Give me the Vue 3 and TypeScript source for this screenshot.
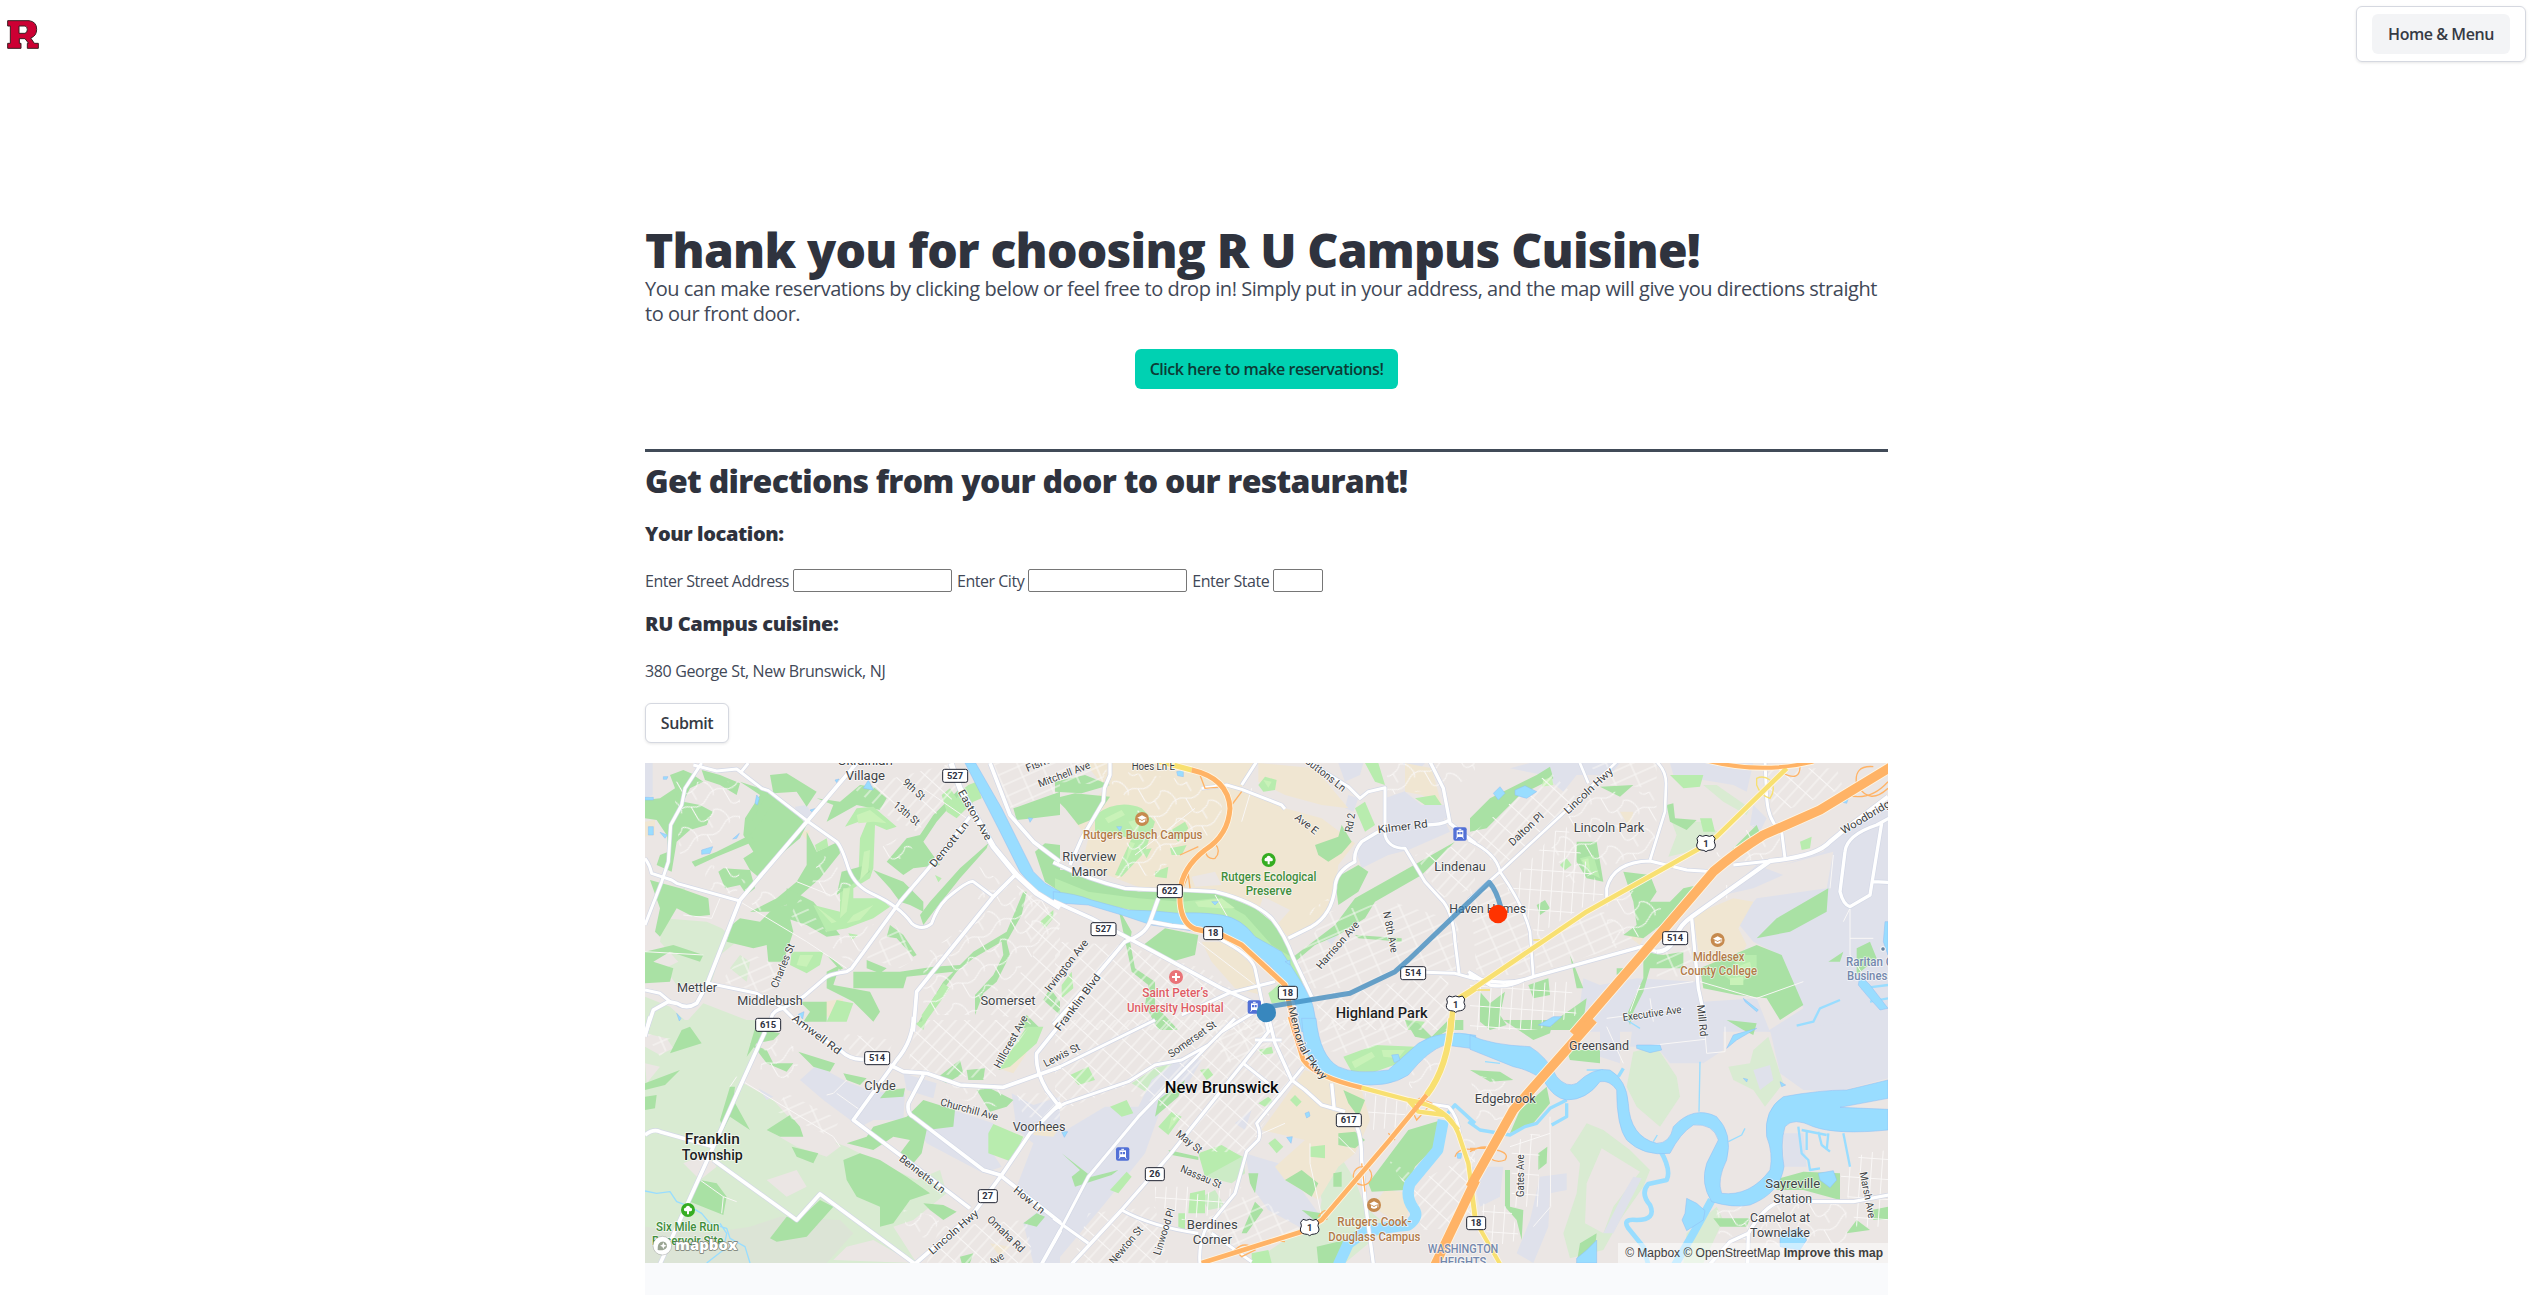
<script setup lang="ts">
import { ref } from 'vue'

type Sheet = 'A' | 'B' | 'C' | 'D' | 'E' | 'F'
type Shape = [Sheet, string, string]
type Place = [Sheet, string, number, number, number, string]
type Street = [Sheet, string, number, number, number, number]
type Shield = [Sheet, string, number, number]

// The map is drawn in six sheets of one common coordinate space.
const origin: Record<Sheet, [number, number]> = {
  A: [0, 0], B: [1245, 0], C: [2490, 0], D: [0, 795], E: [1245, 795], F: [2490, 795],
}
const at = (s: Sheet, x = 0, y = 0) => `translate(${origin[s][0] + x} ${origin[s][1] + y})`

const areas: Shape[] = [
  // open land
  ['A', 'field', 'M70 490L200 500 245 520 290 560 240 600 215 680 110 690 75 640 115 620 60 560Z'],
  ['A', 'field', 'M15 725L90 755 140 800 190 745 410 830 15 830Z'],
  ['A', 'field', 'M120 160L180 170 165 198 130 185ZM105 400L135 400 130 450 100 450ZM300 600L330 620 320 680 270 640Z'],
  ['D', 'field', 'M15 0L370 0 310 190 400 240 480 330 620 380 700 420 830 480 900 450 920 520 820 600 760 620 830 729 15 729Z'],
  ['D', 'moss', 'M15 620L200 640 330 620 420 590 600 600 640 640 560 729 15 729Z'],
  ['D', 'land', 'M15 40L80 55 100 85 60 105 15 80ZM15 130L60 140 20 190ZM400 340L470 310 560 345 600 380 560 410 470 380ZM580 720L620 680 700 660 820 729Z'],
  ['D', 'land', 'M130 430L200 400 230 440 180 480ZM380 480L470 450 500 500 440 530Z'],
  ['E', 'field', 'M760 370L850 400 900 480 930 560 1000 620 870 729 590 729 690 660 790 600 800 540Z'],
  ['E', 'field2', 'M230 190L300 145 350 130 345 190 280 220ZM440 400L500 380 565 410 570 460 530 490 450 470ZM440 530L480 510 510 560 460 570Z'],
  ['F', 'field', 'M350 310L400 330 480 390 540 450 520 500 450 600 400 690 300 715 280 640 320 520 330 430 300 390Z'],
  ['F', 'land', 'M395 385L510 455 430 560 400 640 345 610 350 490Z'],
  ['F', 'field', 'M490 95L560 80 620 170 630 230 570 320 500 260 470 200Z'],
  ['F', 'field', 'M775 140L840 130 850 90 895 50 940 190 885 260 850 210 790 180Z'],
  ['F', 'field', 'M650 640L740 560 760 600 700 729 640 729Z'],
  ['C', 'field', 'M605 200L690 200 760 240 680 285 595 305 620 240ZM700 90L740 90 840 160 830 180 760 140Z'],
  // built-up and industrial
  ['A', 'works', 'M15 24L38 24 38 120 15 130ZM465 155L500 150 515 175 495 195 470 180Z'],
  ['B', 'works', 'M900 280L1000 215 990 130 1060 105 1060 30 1050 130 1160 180 1185 230 1060 285 1000 300 920 340ZM690 55L715 70 700 90ZM800 100L835 115 800 135ZM850 24L925 24 915 60 870 80ZM880 120L910 130 895 170 870 160ZM1040 24L1110 24 1080 60ZM810 550L860 520 830 570Z'],
  ['B', 'works', 'M560 360L600 310 620 320 570 440 540 430ZM990 140L1050 110 1100 150 1180 150 1180 190 1000 210Z'],
  ['C', 'works', 'M120 40L180 24 310 24 450 24 420 60 320 60 280 110 220 60ZM600 24L850 24 830 110 790 90 610 60ZM850 150L890 190 870 230 840 210Z'],
  ['C', 'works', 'M940 330L1060 290 1120 210 1254 160 1254 830 890 830 1000 760 930 600 850 560 800 500 860 430 1070 400 1090 290Z'],
  ['C', 'works', 'M340 670L390 690 500 670 680 680 700 740 860 730 900 830 320 830ZM760 420L860 330 940 360 850 400Z'],
  ['D', 'works', 'M480 180L530 135 620 185 700 215 795 220 790 300 700 300 660 322 550 240ZM790 160L890 190 880 235 800 210ZM835 330L870 305 940 270 1060 310 1045 380 1085 440 1030 460 860 370ZM355 205L400 230 380 240Z'],
  ['D', 'works', 'M1115 220L1180 255 1260 230 1260 729 1180 729 1150 610 1210 560 1130 500 1180 370 1130 330Z'],
  ['E', 'works', 'M0 350L150 260 250 260 290 180 380 110 440 120 400 190 320 260 270 400 150 550 0 729ZM570 400L670 430 740 510 790 580 740 625 640 570 590 500ZM540 310L590 270 570 330Z'],
  ['F', 'works', 'M900 30L1254 0 1254 175 1100 215 1000 210 930 160ZM490 0L760 0 760 90 700 130 600 130 560 80 480 80ZM390 0L450 20 450 130 390 110ZM210 470L290 460 290 510 240 520 235 620 190 729 140 700 180 600ZM940 340L1000 340 1010 440 940 440ZM0 440L100 440 90 530 30 560Z'],
  ['F', 'works', 'M455 530L490 470 515 475 430 640 400 640ZM850 150L900 135 910 180 870 210Z'],
  // campuses
  ['B', 'campus', 'M90 24L600 24 560 95 690 160 800 190 900 265 850 330 835 440 790 500 700 545 600 460 480 405 260 400 80 330 100 250 60 200 150 100Z'],
  ['B', 'campus', 'M610 24L780 40 880 160 800 150 690 120 610 80ZM1050 24L1130 40 1160 150 1100 120 1050 110ZM440 560L520 560 600 640 620 720 540 700 470 620Z'],
  ['B', 'land', 'M625 425L705 465 670 505 605 480ZM410 365L480 350 500 390 420 395Z'],
  ['C', 'campus', 'M670 480L790 430 850 440 805 520 830 570 790 640 690 620ZM450 170L490 170 480 220ZM470 540L520 550 510 570Z'],
  ['E', 'campus', 'M750 150L920 210 945 300 900 400 850 440 790 540 690 480 660 440 750 360 620 330ZM990 510L1070 520 1050 620 950 560Z'],
  ['A', 'campus', 'M15 200L45 195 45 240 15 245ZM480 230L510 225 500 255ZM555 740L610 730 600 790 560 785ZM980 85L1010 90 1000 120Z'],
  ['D', 'campus', 'M1090 150L1110 90 1160 100 1120 160ZM1180 310L1260 320 1240 350 1180 345ZM1050 670L1110 680 1080 710Z'],
  // woods
  ['A', 'wood', 'M15 135L60 130 105 100 90 60 130 45 165 60 130 120 110 200 80 240 50 195 15 190Z'],
  ['A', 'wood', 'M125 70L160 60 190 80 150 100 130 140 180 150 218 170 200 210 150 225 110 260 95 350 50 330 60 300 85 290 80 230Z'],
  ['A', 'wood', 'M185 45L240 60 300 85 290 120 240 90 195 75ZM300 80L390 110 460 165 500 210 480 250 420 300 360 370 330 345 310 310 340 290 310 240 315 190 360 120 330 100Z'],
  ['A', 'wood', 'M155 320L230 290 330 240 345 258 230 305 165 335ZM390 60L440 55 530 110 500 155 470 110 400 115ZM530 130L600 140 660 90 700 95 740 130 720 165 650 150 560 200 580 150Z'],
  ['A', 'wood', 'M500 230L530 290 595 260 600 295 540 370 460 440 390 470 330 470 410 430 470 380 500 330ZM30 375L120 400 205 430 210 480 160 485 110 460 60 545 45 530 60 460Z'],
  ['A', 'wood', 'M275 510L300 490 360 500 400 460 440 450 460 530 430 620 385 620 380 570 340 580 260 560ZM440 400L520 440 570 500 600 540 560 545 500 510 440 490Z'],
  ['A', 'wood', 'M700 345L790 380 850 440 850 470 810 450 780 440 750 400ZM740 320L800 250 840 240 880 180 960 100 960 120 890 200 850 260 900 330 820 340 790 360Z'],
  ['A', 'wood', 'M840 480L870 440 960 340 1045 265 1040 280 960 370 880 470 850 510ZM750 510L790 540 830 600 820 605 770 550 740 545ZM560 650L600 630 580 690 690 710 720 770 700 800 640 740 560 700Z'],
  ['A', 'wood', 'M640 650L780 650 880 635 960 630 1000 590 1100 530 1150 410 1160 410 1145 480 1100 560 1110 600 1070 680 1030 715 1005 780 1005 720 1060 660 1090 600 1085 560 1000 610 950 650 890 730 840 810 830 810 910 680 940 650 800 665 790 700 640 700Z'],
  ['A', 'wood', 'M15 590L100 570 190 600 180 620 90 590 40 620 100 640 90 680 15 685ZM480 740L560 740 560 800 490 800 510 770ZM1130 820L1160 780 1200 820ZM680 615L740 640 720 655 680 640Z'],
  ['A', 'wood', 'M1120 160L1260 110 1260 180 1180 190 1130 195ZM1185 290L1215 265 1260 270 1260 410 1215 380ZM1210 735L1230 700 1260 740 1260 780Z'],
  ['A', 'park', 'M905 120L930 100 950 130 960 110 985 90 1010 80 1025 130 1000 140 950 190 920 170ZM525 270L560 250 565 275 530 290Z'],
  ['A', 'park', 'M615 215L650 160 700 155 770 215 740 225 705 210 700 340 690 370 640 400 640 430 720 430 750 455 700 490 620 520 560 530 520 450 600 470 600 390 655 370 660 250 685 190Z'],
  ['A', 'park', 'M455 590L550 590 540 630 500 655 450 630ZM625 535L655 540 635 555ZM590 735L640 745 620 800 560 800ZM845 780L910 685 930 700 850 810ZM1200 500L1240 465 1240 490 1215 520ZM885 360L905 370 895 382Z'],
  ['B', 'wood', 'M0 130L60 115 165 125 120 190 70 210 30 160ZM0 80L90 60 165 90 80 115 0 110Z'],
  ['B', 'park', 'M120 180Q190 130 260 160L300 200 270 290 200 365 180 360 230 250 120 230ZM340 230L390 200 400 220 370 260ZM345 280L395 270 380 300 350 300Z'],
  ['B', 'park', 'M610 90L630 65 665 75 660 105 625 110ZM930 24L970 24 990 90 960 80ZM300 350L340 335 335 370 300 365ZM260 285L290 280 275 310Z'],
  ['B', 'park', 'M0 345L60 345 100 370 250 410 380 410 500 415 600 460 680 525 710 600 745 690 720 655 600 545 500 480 370 475 240 468 100 437 0 415Z'],
  ['B', 'wood', 'M0 345L60 345 100 370 250 410 480 412 600 460 680 525 715 610 650 570 570 480 480 430 380 440 250 430 100 410 0 370Z'],
  ['B', 'wood', 'M780 270L850 245 860 210 890 260 860 295 820 320 790 300ZM840 370L910 330 940 350 910 410 850 450ZM715 605L840 510 900 430 1060 340 1200 260 1100 360 960 440 930 490 850 540 780 570 720 620Z'],
  ['B', 'wood', 'M265 570L330 520 430 540 420 600 350 620ZM190 460L230 530 225 560 240 640 300 680 300 750 370 825 310 825 270 750 280 690 230 650ZM900 540L1040 550 1040 560 910 550Z'],
  ['B', 'park', 'M900 160L930 140 960 210 930 230ZM1080 130L1140 120 1160 150 1110 150ZM640 715L680 680 700 690 690 740 650 745ZM20 690L50 650 55 700 20 730ZM1050 795L1110 800 1090 825 1060 825Z'],
  ['C', 'wood', 'M60 130L200 60 240 35 250 70 150 120 50 220 0 230 0 190ZM390 95L490 90 450 125ZM590 150L610 145 615 190 680 195 650 225 600 200ZM320 260L380 260 400 380 350 370 320 320Z'],
  ['C', 'wood', 'M460 350L540 360 560 410 540 440 600 440 640 400 685 390 600 490 520 550 460 540 500 510 490 440ZM760 310L860 210 870 235 790 290ZM860 550L920 490 1075 400 1070 470 960 530Z'],
  ['C', 'wood', 'M690 640L860 570 935 600 1000 750 930 795 890 730 800 720 700 700ZM520 590L580 600 640 590 640 640 540 640 520 710 490 770 480 810 470 780 520 670Z'],
  ['C', 'wood', 'M200 450L225 435 240 460 210 480ZM30 710L60 745 105 710 90 780 110 810 60 825 30 800ZM175 690L235 670 240 720 190 730ZM300 600L340 700 320 700ZM250 800L350 730 340 800 300 825 240 825ZM1160 580L1200 560 1220 610 1160 660ZM440 640L470 640 440 660ZM1075 620L1120 590 1110 620Z'],
  ['C', 'park', 'M600 60L700 60 690 95 640 100ZM690 190L725 190 735 230 700 230ZM270 330L290 310 305 330 285 345ZM330 310L370 300 390 370 350 350ZM760 660L820 600 860 600 860 650 800 690ZM990 260L1025 245 1020 280 995 285Z'],
  ['D', 'wood', 'M390 655L440 590 475 600 540 540 580 560 500 650 410 665ZM610 420L660 400 720 420 800 470 870 520 810 540 760 610 720 620 720 560 650 530 620 480Z'],
  ['D', 'wood', 'M620 370L680 350 700 320 800 290 850 240 945 270 940 320 860 330 845 400 820 430 780 400 810 360 760 350 700 390ZM455 380L535 400 520 430 470 410ZM475 95L585 130 570 155 520 140Z'],
  ['D', 'wood', 'M890 175L960 120 970 160 920 190ZM980 150L1035 145 1030 180 985 180ZM1010 210L1050 205 1120 240 1100 260 1050 275ZM740 210L795 205 790 230 720 235ZM610 160L680 175 660 195 620 180ZM380 330L450 285 480 320 490 350 420 350Z'],
  ['D', 'wood', 'M15 190L120 150 75 195 15 210ZM15 230L50 225 45 265 15 270ZM125 30L150 20 185 70 90 100ZM270 200L285 200 280 240 330 330 270 290 250 330 240 300ZM330 70L380 90 400 130 460 130 440 155 380 130 350 90ZM180 480L230 490 260 530 250 585 150 545Z'],
  ['D', 'wood', 'M850 550L910 555 950 575 910 600 870 570ZM1150 610L1190 580 1215 590 1190 620ZM960 710L1000 700 990 729 965 729ZM345 25L420 40 400 60 350 70 320 110Z'],
  ['D', 'park', 'M1045 340L1060 312 1150 350 1115 425 1045 400ZM1075 150L1160 20 1210 20 1190 70 1110 140ZM825 10L860 0 850 30Z'],
  ['E', 'wood', 'M940 490L1060 330 1160 300 1150 370 1080 440 1050 510 950 515ZM690 480L740 450 790 490 770 530 740 510ZM835 460L860 455 860 500 835 500ZM580 460L610 460 600 520 585 490ZM600 545L625 570 575 640 560 640Z'],
  ['E', 'wood', 'M20 400L110 470 190 450 170 465 60 500 50 470 75 450ZM310 240L390 180 370 230 300 290ZM340 390L430 410 430 420 350 405ZM850 340L900 335 930 360 900 385 850 375ZM865 210L930 240 910 290 880 250ZM785 680L870 660 840 729 790 729ZM740 570L800 580 790 610Z'],
  ['E', 'park', 'M865 110L960 75 1080 80 1060 120 960 155 890 155ZM45 165L100 140 120 180 70 195ZM165 260L215 240 235 280 200 290ZM310 320L350 275 380 290 340 345ZM165 510L215 455 230 470 190 520ZM405 520L450 510 450 580 400 580Z'],
  ['E', 'park', 'M435 150L460 145 475 165 455 180ZM610 90L650 80 655 100 620 105ZM430 400L500 375 560 410 450 470ZM765 380L810 375 810 415 765 410ZM640 370L660 355 685 380 665 400ZM610 250L640 230 655 245 630 260ZM705 240L720 225 740 245 725 260ZM590 700L640 690 650 729 590 729ZM370 580L390 580 390 630 370 620Z'],
  ['F', 'wood', 'M100 0L250 0 240 40 190 60ZM290 90L390 90 390 130 300 120ZM120 340L150 270 230 200 240 250 190 310ZM0 150L90 155 130 180 60 185ZM910 480L1000 455 1110 460 1110 540 1000 510 920 510Z'],
  ['F', 'wood', 'M105 450L120 450 120 560 160 570 155 660 140 600 105 560ZM205 400L232 380 230 430 205 450ZM730 595L840 595 830 620 750 620ZM1205 570L1254 560 1254 600 1210 600ZM1160 600L1200 630 1130 640ZM770 0L860 10 850 45 820 30ZM330 670L380 640 370 729 320 729Z'],
  ['E', 'wood', 'M1050 0L1080 50 1130 60 1180 30 1225 30 1225 0 1180 0 1130 50 1090 10Z'],
  // creek-side strips and golf fairways
  ['A', 'wood', 'M250 340L330 345 345 400 320 420 300 390 255 400 235 350ZM385 110L410 125 370 190 330 240 325 215ZM560 600L575 610 610 640 600 645ZM590 420L605 350 680 330 690 350 620 400Z'],
  ['A', 'fair', 'M650 180L690 165 740 205 700 200 655 205ZM672 290L690 285 685 350 660 375ZM610 400L630 400 620 470 600 490ZM640 480L700 450 660 495 620 505ZM530 455L590 500 575 505ZM480 600L520 600 500 635 470 630Z'],
  ['B', 'fair', 'M150 190L200 165 210 180 160 205ZM220 200L260 190 245 240ZM225 260L240 265 210 330ZM625 75L650 80 640 98ZM420 440L500 430 540 460 500 460 430 455Z'],
  ['E', 'fair', 'M890 125L950 95 960 110 900 145ZM980 90L1050 90 1030 115 985 110ZM350 290L370 295 340 330Z'],
  ['C', 'fair', 'M335 315L355 310 360 345ZM790 640L840 620 845 640 800 665ZM220 75L245 65 250 90 215 95ZM780 670L820 665 820 690 780 690Z'],
]

const water: Shape[] = [
  ['A', '', 'M975 24L1007 24 1085 160 1180 350 1215 385 1260 410 1260 448 1190 410 1140 350 1080 230Z'],
  ['B', '', 'M-5 410Q60 415 110 435L220 465 300 468 370 475Q430 470 500 480 560 490 600 545L680 590Q720 650 750 700 780 740 785 830L740 830 720 740Q690 660 600 595L490 535 430 530 290 510 200 480 100 450 -5 443Z'],
  ['E', '', 'M740 -5L783 -5Q795 110 850 140 900 165 1000 150L1090 70Q1160 25 1262 46L1262 87 1170 75Q1120 90 1060 165 1000 205 900 192 800 180 770 130 745 80 740 -5Z'],
  ['F', '', 'M0 45Q60 75 180 80 230 110 260 170 290 205 320 190 370 140 420 150 470 180 475 250 480 350 560 370 600 370 610 320 670 255 740 290 790 340 770 420 740 480 755 520 840 530 900 450 910 400 890 350 880 270 940 230 1050 210 1130 210L1254 180 1254 235 1110 262 1254 268 1254 330Q1100 345 1030 320 970 290 945 320 930 370 942 440 930 520 840 555 790 565 725 545 690 490 710 430L745 360Q730 310 670 315 630 340 600 400 520 410 470 360 440 320 440 210 420 180 390 185 350 240 290 240 250 235 220 180 180 150 130 140L0 88Z'],
  ['F', '', 'M650 535L680 550 705 572 700 600 650 632 636 600 645 580ZM320 715L350 690 380 660 380 729 320 729ZM930 640L990 625 1010 660 990 690 930 680ZM1045 460L1090 452 1100 480 1080 503 1050 480ZM500 75L570 75 575 90 540 98 500 85ZM770 85L790 45 860 25 800 60ZM820 175L833 178 830 186ZM930 185L947 195 935 200Z'],
  ['A', '', 'M670 100L685 75 700 105ZM185 285L218 275 210 295 185 298ZM350 120L358 130 352 150 345 145ZM278 252L298 235 290 250ZM25 215L40 215 40 240 25 240ZM510 165L528 160 520 175ZM15 127L40 127 40 135 15 135ZM70 65L84 65 80 73 70 73ZM60 232L82 240 75 250ZM475 778L492 770 488 792ZM1165 188L1178 190 1170 202ZM110 775L123 790 118 798ZM585 75L597 72 590 83Z'],
  ['B', '', 'M365 50L385 45 385 65 368 62ZM470 440L490 440 480 450ZM690 620L705 615 705 630ZM185 215L200 215 195 228Z'],
  ['C', '', 'M70 115L90 95 105 115 85 135ZM135 105L165 92 200 110 170 130 135 120ZM205 810L250 785 275 785 240 815ZM1170 660L1200 690 1254 760 1230 765 1190 720 1165 690ZM1245 500L1254 500 1254 600 1240 560ZM820 730L865 765 860 770 825 740ZM1110 140L1135 130 1130 145Z'],
  ['E', '', 'M1010 105L1030 103 1035 120 1018 128ZM750 280L762 275 765 288 755 294ZM695 352L712 350 708 370ZM20 335L38 335 28 352ZM1205 400L1220 400 1218 415 1208 415Z'],
]

const streams: [Sheet, number, string][] = [
  ['E', 34, 'M1165 300L1148 390 1065 490Q1050 530 1075 565 1095 590 1060 615 1000 620 930 635L880 670 850 735'],
  ['E', 11, 'M1170 290L1200 255 1260 310'],
  ['F', 10, 'M-5 305L30 330 120 345 165 320 200 310 240 265 290 240M245 315L290 290 290 250M445 170L460 145'],
  ['F', 14, 'M570 390Q605 450 590 480L535 492Q510 520 540 555 560 600 500 600 455 595 475 625L520 680 535 735'],
  ['F', 24, 'M725 540L670 640 615 735'],
  ['F', 4, 'M690 125L687 275M775 365L815 345 825 325M550 365L562 345M45 125L90 130M350 150L400 150M510 25L470 0'],
  ['F', 7, 'M985 320L995 400 1015 420 1020 450 1050 445M995 330L1070 345M1010 335L1010 390M1045 335L1055 375 1080 395M1120 340L1140 440M1075 340L1070 390M1135 295L1170 298'],
  ['D', 4, 'M15 513L50 520 90 515 110 545 150 560 185 580 210 610 260 625 270 655 315 680 330 729M240 610L260 640 250 690 200 729'],
  ['C', 7, 'M980 812L1030 800 1050 760 1110 735M1175 700L1254 690M1200 740L1254 730'],
]

const grids: Shape[] = [
  ['A', 'g-loop', 'M100 80L300 80 300 230 120 300ZM540 290L640 380 600 440 510 410ZM700 290L790 240 830 300 740 320ZM560 560L720 500 640 640ZM1010 330L1130 410 1050 460 1000 420ZM850 600L1100 430 1200 420 1260 520 1000 780 850 780ZM300 370L420 420 350 480ZM200 330L300 340 290 420 190 400Z'],
  ['A', 'g-45', 'M640 100L940 24 960 110 830 230 740 180ZM1130 390L1260 480 1260 800 1050 780 1180 600Z'],
  ['A', 'g-20', 'M1060 24L1260 24 1260 110 1110 160ZM320 590L430 640 400 720 240 680ZM480 430L560 530 530 560 450 480ZM760 500L830 610 780 640 680 610Z'],
  ['B', 'g-20', 'M0 24L160 24 140 90 0 80ZM820 470L1010 440 1210 500 1210 650 1030 640 890 700 770 700 720 620Z'],
  ['B', 'g-45', 'M0 560L200 570 440 640 620 760 600 825 0 825ZM780 720L1180 660 1180 825 800 825ZM1080 300L1260 260 1260 400 1160 430Z'],
  ['B', 'g-loop', 'M120 40L360 70 500 110 500 220 400 270 300 360 180 370 250 160ZM990 120L1180 100 1260 60 1260 24 1000 24ZM760 470L820 430 830 480 780 510Z'],
  ['C', 'g-45', 'M0 240L240 50 320 130 90 350ZM890 40L1100 40 1120 100 910 180Z'],
  ['C', 'g-loop', 'M230 250L370 110 560 110 560 300 420 330 300 390ZM730 300L850 210 930 240 930 310 800 320ZM400 460L460 400 580 430 560 520 430 580Z'],
  ['C', 'g-20', 'M190 540L400 470 500 560 200 650ZM0 400L120 380 180 540 180 660 20 660ZM560 600L660 560 670 660 560 670ZM350 24L560 24 560 100 420 90Z'],
  ['C', 'g-0', 'M110 400L280 200 380 380 400 420 200 540ZM0 690L300 680 320 780 200 825 0 825Z'],
  ['D', 'g-45', 'M830 0L1180 0 1060 180 800 150ZM600 40L760 60 740 120 640 110ZM900 620L1160 600 1180 729 860 729ZM1130 220L1260 220 1260 300 1150 290Z'],
  ['D', 'g-loop', 'M380 40L500 100 440 180 360 150ZM790 570L900 590 880 660 800 640ZM910 180L1090 210 1070 260 920 230Z'],
  ['D', 'g-20', 'M440 220L600 300 570 350 400 270ZM15 40L110 60 60 110Z'],
  ['E', 'g-45', 'M0 0L700 0 740 130 570 400 400 390 340 270 200 200 0 280ZM100 580L300 560 340 729 50 729ZM1000 420L1100 480 1260 400 1260 620 1100 630 1080 540Z'],
  ['E', 'g-20', 'M430 0L700 0 620 90 520 130ZM790 0L1050 0 1060 60 870 100 800 90ZM470 560L600 520 740 630 560 690 450 640Z'],
  ['E', 'g-0', 'M300 500L400 500 400 580 300 560ZM380 530L560 500 500 580 380 600ZM930 220L1060 250 1040 320 950 330Z'],
  ['E', 'g-loop', 'M1080 100L1180 110 1120 220 1060 200ZM1220 330L1260 330 1260 500Z'],
  ['F', 'g-loop', 'M0 160L120 190 120 300 20 300ZM740 570L850 550 830 660 740 640ZM880 560L1130 540 1130 660 1020 700 850 729Z'],
  ['F', 'g-0', 'M125 370L210 330 205 560 125 560ZM30 550L120 560 150 660 60 680ZM1110 460L1180 400 1254 390 1254 620 1160 620Z'],
]

const minor: Shape[] = [
  ['C', '', 'M500 705L670 680M410 790L640 760M510 690L480 770M540 730L550 800M1090 300L1080 400M1120 500L1140 460M1140 550L1210 550M690 680L860 730 1000 680M770 430L770 390'],
  ['C', '', 'M1140 455L1140 600 1180 660'],
  ['F', '', 'M510 80L705 58M705 40L710 100 765 95 765 20M240 290L242 560 190 620M410 20L460 130M120 380L240 340'],
  ['D', '', 'M310 185L580 350 600 380M270 200L290 170M560 225L580 220 620 180M590 220L660 270M180 480L250 530 290 545M250 530L245 580'],
  ['E', '', 'M765 370L765 430 800 590M600 350L690 310M850 350L900 400'],
  ['A', '', 'M300 440L500 560 620 640M470 380L570 420M15 590L190 600M850 100L980 190M240 430L215 490 130 480'],
  ['B', '', 'M430 560L600 690M480 420L560 560M240 300L420 160M590 100L560 200'],
]

const roads: [Sheet, number, string][] = [
  ['A', 9, 'M185 24L135 100 125 150 92 210 85 320 65 380 15 510'],
  ['A', 9, 'M160 30L230 48 290 42 365 100 385 107 505 200 590 260Q605 275 625 340 645 395 700 418 780 455 815 505 845 530 875 505 890 460 920 430 985 375 1000 380L1060 425M325 24L300 55'],
  ['A', 11, 'M650 24L505 195 300 435 200 690 170 745Q140 765 110 745L85 740 40 765 18 830'],
  ['A', 9, 'M15 310Q30 330 35 355L95 375 110 385 300 438M15 705L60 715 90 740M205 685L350 715 430 760 490 820'],
  ['A', 10, 'M990 185L870 335 780 440 635 640 620 650Q580 655 560 665L490 725 430 760Q395 765 393 795'],
  ['A', 16, 'M933 24L960 100 1040 240 1060 275 1130 360 1190 415 1260 458'],
  ['A', 11, 'M1130 355L1060 425 830 710 820 830M1050 24L1110 180 1180 260 1260 320'],
  ['B', 10, 'M165 20L165 60 148 100 145 140 80 250 45 330M-5 322Q100 375 210 400L310 405M385 405L480 410Q600 440 650 490 690 540 715 610L770 725'],
  ['B', 9, 'M605 20L560 90M440 100L515 90 560 103 680 150 690 162M760 20L880 95 915 130 940 110 990 98 990 240Q1000 280 1050 280L1110 380 1165 440Q1195 480 1200 560L1212 655'],
  ['B', 10, 'M1262 266L1185 205 1165 100 1125 20M1110 210Q1160 210 1180 197M970 230L920 260Q895 290 900 320 840 350 840 400 830 480 770 515L700 550'],
  ['B', 11, 'M-5 438L110 490 250 565 500 700 600 745M310 430L285 500 350 512 440 522M285 500Q270 540 210 560L100 690 -5 810'],
  ['B', 9, 'M490 550Q590 600 600 640L640 830M380 780L520 715 660 680M500 830L600 770M1110 652L1200 655 1262 672'],
  ['C', 8, 'M328 20L355 85M560 20Q590 50 588 90L585 170 540 315M440 20L280 175 90 350 -5 435M-5 255Q80 295 90 350 160 450 180 530L190 665'],
  ['C', 9, 'M410 440L410 400Q430 320 540 318L650 345 730 350M885 20L890 130Q895 200 935 230L945 310M790 330L900 318'],
  ['C', 13, 'M1254 125L1110 235 1080 260Q1040 305 900 318L665 485Q630 510 620 540 600 590 560 590'],
  ['C', 10, 'M560 590L515 575 190 665Q100 700 -5 662M665 490L685 700 700 770M-5 650L60 690Q110 700 160 675'],
  ['C', 10, 'M1256 190L1220 210Q1130 240 1125 290L1110 410Q1120 450 1140 455L1200 420 1235 205M1210 380L1256 382'],
  ['D', 11, 'M375 35L300 200 220 380 60 732M15 345Q40 325 60 335L220 380M220 420L470 600 540 522 825 732'],
  ['D', 11, 'M460 0L600 90Q630 120 670 118M750 135L790 155 860 160 960 195 1090 202 1262 140M820 -10Q820 60 770 120L640 300 780 405 990 565'],
  ['D', 11, 'M850 165L805 250Q800 280 820 290L1030 450 1080 465 1262 608M825 732L1000 580 1085 465 1170 340 1262 248M1262 10L1190 100Q1185 150 1220 210L1262 265M1262 630L1205 732M30 -10L15 50'],
  ['E', 9, 'M-5 150L300 0M-5 270L30 250 220 185 300 135 380 120 460 75 540 -5M-5 670L100 470 250 290 460 75'],
  ['E', 10, 'M50 732L200 570 340 410 500 210 645 30M640 -10L660 70 710 180 750 210 800 255 870 275M905 320Q920 350 920 420L930 540 955 732M830 190L838 270'],
  ['E', 9, 'M745 140L605 310Q620 340 610 360L575 395 540 520 450 630Q430 680 435 732M200 570Q290 620 430 640M-5 595L100 670M470 640L590 725M565 130L640 190M600 60L680 60M1110 250L1180 260Q1210 290 1215 350'],
  ['F', 10, 'M1256 525L1150 545 930 545Q880 560 835 640L780 665 720 732M835 640L833 732'],
]

const highways: [Sheet, string, number, string][] = [
  ['B', 'trunk', 16, 'M270 8L410 45'],
  ['C', 'trunk', 14, 'M-60 745L0 708 350 470 680 285 740 245 950 40'],
  ['B', 'trunk', 16, 'M1187 830L1195 745 1262 700'],
  ['E', 'trunk', 18, 'M1189 -5Q1180 140 1115 225'],
  ['E', 'trunk', 13, 'M920 203L1060 240Q1180 260 1210 340L1240 430 1262 600M1060 240L1090 275 1170 285 1210 330'],
  ['F', 'trunk', 12, 'M0 480L15 600 90 732'],
  ['B', 'way', 15, 'M410 45Q520 70 525 160 520 240 450 285 380 340 375 410 370 500 420 522L500 540 560 570 690 690 715 800 720 830'],
  ['E', 'way', 14, 'M705 -10L745 120Q780 170 920 203M1115 225L1000 365 800 600 740 635 440 729'],
  ['C', 'way', 12, 'M700 14Q870 60 1030 20'],
  ['C', 'way', 28, 'M310 838L580 525 730 350Q800 290 880 240L1050 165 1262 36'],
  ['F', 'way', 28, 'M370 -2L130 270 0 502'],
  ['E', 'way', 28, 'M1262 480L1140 735'],
]

const ramps: Shape[] = [
  ['B', 'way', 'M435 60L450 100 510 95M560 110L530 150M375 300L430 275M450 285Q455 315 480 310 500 290 480 265M385 395L400 360 405 400'],
  ['E', 'way', 'M895 465A25 25 0 1 1 950 470 25 25 0 1 1 895 465M920 430L930 515M1070 250L1095 235 1130 250 1085 300 1070 270M540 690Q570 660 600 690L560 710ZM790 590Q820 550 815 600M1000 340L1020 360M1200 410Q1210 380 1260 390M640 660L690 665'],
  ['F', 'way', 'M0 395Q40 370 80 390 120 400 105 420 80 430 60 415M60 370L110 280M0 385L50 385'],
  ['C', 'way', 'M1160 90Q1150 30 1210 35M1165 95Q1200 150 1254 100M1130 120Q1200 140 1254 80M940 55Q990 80 990 35'],
  ['C', 'trunk', 'M860 70Q880 60 900 75 920 100 900 130 870 120 860 90ZM580 340L610 335M190 555L215 555M20 705L60 705'],
]

const places: Place[] = [
  ['A', 'Ukrainian', 676, 31, 165, ''], ['A', 'Village', 676, 76, 118, ''], ['A', 'Mettler', 171, 711, 120, ''],
  ['A', 'Middlebush', 390, 750, 196, ''], ['A', 'Somerset', 1104, 750, 165, ''],
  ['B', 'Riverview', 103, 318, 162, ''], ['B', 'Manor', 103, 362, 107, ''],
  ['B', 'Rutgers Busch Campus', 263, 251, 358, 'school'],
  ['B', 'Rutgers Ecological', 641, 377, 286, 'nature'], ['B', 'Preserve', 641, 420, 138, 'nature'],
  ['B', 'Saint Peter’s', 361, 726, 198, 'health'], ['B', 'University Hospital', 361, 770, 290, 'health'],
  ['B', 'Highland Park', 980, 788, 276, 'town'],
  ['C', 'Lindenau', -30, 347, 155, ''], ['C', 'Haven Homes', 53, 475, 230, ''], ['C', 'Lincoln Park', 417, 232, 212, ''],
  ['C', 'Middlesex', 746, 617, 154, 'school'], ['C', 'County College', 746, 660, 230, 'school'],
  ['C', 'Raritan Center', 1239, 633, 222, 'firm'], ['C', 'Business Park', 1239, 676, 216, 'firm'],
  ['D', 'Clyde', 720, 209, 94, ''], ['D', 'Voorhees', 1197, 332, 158, ''],
  ['D', 'Franklin', 217, 371, 165, 'town'], ['D', 'Township', 217, 420, 183, 'town'],
  ['D', 'Six Mile Run', 143, 633, 190, 'nature'], ['D', 'Reservoir Site', 143, 676, 214, 'nature'],
  ['E', 'New Brunswick', 500, 219, 342, 'city'], ['E', 'Berdines', 472, 628, 153, ''], ['E', 'Corner', 472, 672, 118, ''],
  ['E', 'Rutgers Cook-', 958, 619, 222, 'school'], ['E', 'Douglass Campus', 958, 662, 276, 'school'],
  ['F', 'WASHINGTON', -21, 699, 212, 'firm'], ['F', 'HEIGHTS', -21, 738, 140, 'firm'],
  ['F', 'Greensand', 387, 89, 180, ''], ['F', 'Edgebrook', 106, 248, 183, ''],
  ['F', 'Sayreville', 968, 505, 165, ''], ['F', 'Station', 968, 549, 116, ''],
  ['F', 'Camelot at', 930, 607, 180, ''], ['F', 'Townelake', 930, 650, 180, ''],
]

const streets: Street[] = [
  ['A', '9th St', 822, 103, 42, 78], ['A', '13th St', 800, 175, 40, 92], ['A', 'Demott Ln', 927, 268, -51, 165],
  ['A', 'Easton Ave', 1005, 180, 60, 170], ['A', 'Charles St', 428, 632, -68, 140], ['A', 'Fisher', 1200, 24, -22, 90],
  ['A', 'Mitchell Ave', 1272, 58, -21, 165], ['B', 'Irvington Ave', 34, 632, -52, 190], ['B', 'Franklin Blvd', 68, 742, -53, 205],
  ['B', 'Hoes Ln E', 295, 34, 0, 130], ['B', 'Suttons Ln', 812, 58, 38, 145], ['B', 'Ave E', 755, 207, 38, 80],
  ['B', 'Rd 2', 885, 203, -80, 58], ['B', 'Kilmer Rd', 1043, 215, -7, 150], ['B', 'Harrison Ave', 848, 570, -49, 178],
  ['B', 'N 8th Ave', 1007, 531, 79, 125], ['C', 'Lincoln Hwy', 355, 107, -43, 188], ['C', 'Dalton Pl', 168, 222, -43, 130],
  ['C', 'Woodbridge Ave', 1222, 165, -31, 250], ['C', 'Executive Ave', 546, 775, -8, 178], ['C', 'Mill Rd', 697, 797, 84, 95],
  ['D', 'Amwell Rd', 530, 43, 37, 175], ['D', 'Hillcrest Ave', 1112, 65, -61, 175], ['E', 'Lewis St', 20, 105, -27, 118],
  ['D', 'Churchill Ave', 988, 268, 15, 178], ['D', 'Bennetts Ln', 847, 462, 38, 165], ['D', 'How Ln', 1168, 540, 39, 110],
  ['D', 'Omaha Rd', 1098, 642, 44, 142], ['D', 'Lincoln Hwy', 940, 636, -41, 185], ['D', 'Marvin Ave', 1030, 742, -32, 140],
  ['E', 'Somerset St', 411, 57, -35, 168], ['E', 'May St', 403, 365, 38, 90], ['E', 'Nassau St', 438, 470, 23, 130],
  ['E', 'Linwood Pl', 327, 635, -72, 145], ['E', 'Newton St', 213, 675, -50, 138],
  ['F', 'Gates Ave', 150, 467, -90, 128], ['F', 'Marsh Ave', 1193, 525, 79, 140],
]

const shields: Shield[] = [
  ['A', '527', 945, 62], ['A', '615', 384, 809], ['B', '622', 344, 408], ['B', '527', 145, 522], ['B', '18', 474, 534],
  ['B', '18', 698, 713], ['B', '514', 1074, 654], ['C', '514', 615, 549], ['D', '514', 711, 114], ['D', '27', 1043, 528],
  ['E', '26', 299, 462], ['E', '617', 881, 300], ['F', '18', 18, 609],
]
const usShields: [Sheet, number, number][] = [['B', 1202, 747], ['C', 708, 265], ['E', 764, 622]]
const schools: [Sheet, number, number][] = [['B', 261, 192], ['C', 743, 555], ['E', 957, 555]]
const parks: [Sheet, number, number][] = [['B', 641, 315], ['D', 144, 570]]
const stations: [Sheet, number, number][] = [['B', 1215, 237], ['B', 598, 756], ['E', 203, 402]]

const street = ref('')
const city = ref('')
const region = ref('')
</script>

<template>
  <div class="page">
    <header class="nav">
      <a class="logo" href="#" aria-label="Home">
        <svg width="32" height="29" viewBox="0 0 96 87">
          <path d="M2 2H66Q89 5 89 28Q89 48 71 54L82 70H94V85H61V70H65L54 56H37V70H42V85H2V70H10V18H2ZM36 18V40H54Q61 38 61 29Q61 19 54 18Z" fill="#cc0033" fill-rule="evenodd" stroke="#3b1d22" stroke-width="3" />
        </svg>
      </a>
      <div class="nav-box"><a class="nav-link" href="#">Home &amp; Menu</a></div>
    </header>

    <main class="content">
      <h1>Thank you for choosing R U Campus Cuisine!</h1>
      <p class="lead">You can make reservations by clicking below or feel free to drop in! Simply put in your address, and the map will give you directions straight<br />to our front door.</p>
      <div class="reserve"><button class="btn primary" type="button">Click here to make reservations!</button></div>
      <hr />
      <h2>Get directions from your door to our restaurant!</h2>
      <h3>Your location:</h3>
      <form class="fields" @submit.prevent>
        <label>Enter Street Address<input v-model="street" type="text" /></label>
        <label>Enter City<input v-model="city" type="text" /></label>
        <label>Enter State<input v-model="region" class="short" type="text" /></label>
      </form>
      <h3 class="second">RU Campus cuisine:</h3>
      <p class="address">380 George St, New Brunswick, NJ</p>
      <button class="btn plain" type="button">Submit</button>

      <section class="map">
        <svg class="canvas" viewBox="15 24 3729 1500" width="1243" height="500">
          <defs>
            <pattern id="g-45" width="62" height="30" patternUnits="userSpaceOnUse" patternTransform="rotate(-48)"><path d="M0 15H62M31 0V30" class="lane" /></pattern>
            <pattern id="g-20" width="66" height="34" patternUnits="userSpaceOnUse" patternTransform="rotate(-24)"><path d="M0 17H66M33 0V34" class="lane" /></pattern>
            <pattern id="g-0" width="32" height="60" patternUnits="userSpaceOnUse" patternTransform="rotate(4)"><path d="M0 30H32M16 0V60" class="lane" /></pattern>
            <pattern id="g-loop" width="110" height="96" patternUnits="userSpaceOnUse" patternTransform="rotate(-30)"><path d="M0 20Q30 0 55 20T110 20M55 20V60Q55 80 80 76T110 60M0 60Q22 66 26 96M26 0Q28 14 20 22M80 76V96M80 0V10" class="lane" /></pattern>
            <path id="pkwy" d="M1945 758L1967 848Q1985 915 2064 992" />
          </defs>
          <rect x="15" y="24" width="3729" height="1500" fill="#ebe6e4" />
          <path v-for="(a, i) in areas" :key="'a' + i" :d="a[2]" :class="a[1]" :transform="at(a[0])" />
          <path v-for="(g, i) in grids" :key="'g' + i" :d="g[2]" :fill="`url(#${g[1]})`" :transform="at(g[0])" />
          <path v-for="(m, i) in minor" :key="'m' + i" :d="m[2]" class="lane" :transform="at(m[0])" />
          <path v-for="(w, i) in streams" :key="'s' + i" :d="w[2]" class="stream" :stroke-width="w[1]" :transform="at(w[0])" />
          <path v-for="(w, i) in water" :key="'w' + i" :d="w[2]" class="water" :transform="at(w[0])" />
          <path v-for="(r, i) in roads" :key="'rc' + i" :d="r[2]" class="casing" :stroke-width="r[1] + 4" :transform="at(r[0])" />
          <path v-for="(r, i) in roads" :key="'r' + i" :d="r[2]" class="road" :stroke-width="r[1]" :transform="at(r[0])" />
          <path v-for="(r, i) in ramps" :key="'p' + i" :d="r[2]" :class="['ramp', r[1]]" :transform="at(r[0])" />
          <path v-for="(h, i) in highways" :key="'hc' + i" :d="h[3]" class="edge" :stroke-width="h[2] + 5" :transform="at(h[0])" />
          <path v-for="(h, i) in highways" :key="'h' + i" :d="h[3]" :class="['hwy', h[1]]" :stroke-width="h[2]" :transform="at(h[0])" />

          <text v-for="(s, i) in streets" :key="'st' + i" class="street" :transform="`${at(s[0], s[2], s[3])} rotate(${s[4]})`" x="0" y="11" :textLength="s[5]" lengthAdjust="spacingAndGlyphs">{{ s[1] }}</text>
          <text class="street path-text"><textPath href="#pkwy" textLength="245" lengthAdjust="spacingAndGlyphs">Memorial Pkwy</textPath></text>

          <g v-for="(s, i) in shields" :key="'sh' + i" :transform="at(s[0], s[2], s[3])">
            <rect :x="s[1].length > 2 ? -37 : -28" y="-19" :width="s[1].length > 2 ? 75 : 57" height="39" rx="6" class="plate" />
            <text y="10" class="num">{{ s[1] }}</text>
          </g>
          <g v-for="(s, i) in usShields" :key="'us' + i" :transform="at(s[0], s[1], s[2])">
            <path d="M-20 -24Q-10 -18 0 -24Q10 -18 20 -24L27 -15Q22 -4 28 5Q28 18 15 20Q5 20 0 25Q-5 20 -15 20Q-28 18 -28 5Q-22 -4 -27 -15Z" class="plate" />
            <text y="11" class="num">1</text>
          </g>

          <g v-for="(p, i) in schools" :key="'sc' + i" :transform="at(p[0], p[1], p[2])">
            <circle r="21" fill="#c68a4e" /><path d="M-14 -4L0 -11 14 -4 0 3ZM-9 1V8Q0 14 9 8V1L0 6Z" fill="#fff" /><path d="M12 -3V7" stroke="#fff" stroke-width="2" />
          </g>
          <g v-for="(p, i) in parks" :key="'pk' + i" :transform="at(p[0], p[1], p[2])">
            <circle r="21" fill="#35ad22" /><path d="M-3 13V4H-8Q-14 3 -12 -3Q-11 -7 -7 -7Q-5 -13 0 -13Q5 -13 7 -7Q11 -7 12 -3Q14 3 8 4H3V13Z" fill="#fff" />
          </g>
          <g v-for="(p, i) in stations" :key="'tr' + i" :transform="at(p[0], p[1], p[2])">
            <rect x="-20" y="-20" width="40" height="40" rx="6" fill="#5270d6" />
            <path d="M-10 -11H10V9H-10Z" fill="#fff" /><path d="M-7 -6H-1V1H-7ZM1 -6H7V1H1Z" fill="#5270d6" /><path d="M-8 9L-11 14M8 9L11 14M-4 -14H4" stroke="#fff" stroke-width="3" />
          </g>
          <g :transform="at('B', 363, 666)"><circle r="21" fill="#ea7378" /><path d="M-12 0H12M0 -12V12" stroke="#fff" stroke-width="6" /></g>
          <circle :transform="at('C', 1239, 582)" r="7" fill="#6c85a3" stroke="#fff" stroke-width="3" />

          <text v-for="(p, i) in places" :key="'pl' + i" :class="['place', p[5]]" :transform="at(p[0], p[2], p[3])" :textLength="p[4]" lengthAdjust="spacingAndGlyphs">{{ p[1] }}</text>

          <path d="M1880 756L2130 715 2265 650 2305 615 2548 382Q2570 408 2582 455L2576 470" class="route" />
          <circle cx="1879" cy="773" r="29" fill="#3887be" /><circle cx="2574" cy="477" r="28" fill="#ff3300" />

          <g :transform="at('D', 67, 677)">
            <circle r="28" fill="#fff" stroke="#777" stroke-opacity=".5" stroke-width="2" /><path d="M-14 13Q-15 -6 -5 -11Q8 -16 13 -5Q17 8 5 12Q-2 15 -14 13Z" fill="#9ba594" />
            <path d="M3 -10L6 -3 13 0 6 3 3 10 0 3 -7 0 0 -3Z" fill="#fff" />
            <text x="38" y="12" class="brand" textLength="187" lengthAdjust="spacingAndGlyphs">mapbox</text>
          </g>
        </svg>
        <div class="credit"><a>© Mapbox</a> <a>© OpenStreetMap</a> <a class="improve">Improve this map</a></div>
      </section>
      <div class="below"></div>
    </main>
  </div>
</template>

<style>
body { background: #fff; overflow: hidden; }
</style>

<style scoped>
* { box-sizing: border-box; }
.page { height: 1295px; overflow: hidden; font: 16px/24px "Open Sans", "Noto Sans", sans-serif; color: #414857; }
.nav { display: flex; justify-content: space-between; align-items: flex-start; height: 226px; padding: 6px 11px 0 7px; }
.logo { display: block; padding-top: 14px; line-height: 0; }
.nav-box { width: 170px; height: 56px; padding: 7px 15px; border: 1px solid #d5d8e0; border-radius: 6px; box-shadow: 0 1px 3px #0000001a; }
.nav-link { display: flex; align-items: center; justify-content: center; height: 40px; border-radius: 6px; background: #f3f4f6; color: #363b45; font-weight: 600; letter-spacing: -.45px; text-decoration: none; white-space: nowrap; }
.content { width: 1243px; margin: 0 auto 0 645px; }
h1, h2, h3, p { margin: 0; color: #2f333e; }
h1 { font-size: 48px; line-height: 48px; font-weight: 800; letter-spacing: -.79px; white-space: nowrap; }
.lead { margin-top: 2px; font-size: 20px; line-height: 25px; letter-spacing: -.45px; color: #414857; white-space: nowrap; }
.reserve { display: flex; justify-content: center; padding-top: 23px; height: 123px; }
.btn { height: 40px; border-radius: 6px; font: 600 16px/24px "Open Sans", sans-serif; letter-spacing: -.45px; white-space: nowrap; padding: 0; }
.primary { width: 263px; border: 0; background: #00d1b2; color: #0c3b35; }
hr { height: 3px; margin: 0; border: 0; background: #414b58; }
h2 { margin-top: 13px; font-size: 32px; line-height: 32px; font-weight: 800; letter-spacing: -.7px; white-space: nowrap; }
h3 { margin-top: 23px; font-size: 20px; line-height: 28px; font-weight: 800; letter-spacing: -.38px; }
.fields { display: flex; gap: 5px; margin-top: 21px; height: 23px; align-items: center; }
.fields label { display: flex; align-items: center; gap: 4px; white-space: nowrap; letter-spacing: -.47px; }
input { width: 159px; height: 23px; padding: 1px 2px; border: 1px solid #767676; border-radius: 2px; background: #fff; }
.short { width: 50px; }
.second { margin-top: 18px; }
.address { margin-top: 21px; line-height: 24px; letter-spacing: -.36px; color: #414857; }
.plain { display: block; width: 84px; margin-top: 20px; border: 1px solid #d5d8e0; background: #fff; color: #363b45; box-shadow: 0 1px 3px #0000001a; }
.map { position: relative; height: 500px; margin-top: 20px; overflow: hidden; }
.canvas { display: block; }
.credit { position: absolute; right: 0; bottom: 0; width: 270px; height: 20px; padding-right: 5px; background: #ffffff80; color: #404040; font: 12px/20px "Liberation Sans", Arial, sans-serif; text-align: right; white-space: nowrap; }
.improve { font-weight: 700; }
.below { height: 32px; background: #f9fafc; }

.land { fill: #ebe6e4; }
.field { fill: #d9ebd2; }
.field2 { fill: #ccebc6; }
.moss { fill: #dce4d6; }
.works { fill: #dfe1eb; }
.campus { fill: #f0e6d2; }
.wood { fill: #a9e1a4; }
.park { fill: #b8ecae; }
.fair { fill: #c9f2b8; }
.lane { fill: none; stroke: #f9f7f6; stroke-width: 3; }
.water { fill: #99ddff; stroke: #8fbdf5; stroke-width: 1.5; }
.stream { fill: none; stroke: #99ddff; stroke-linejoin: round; }
.casing { fill: none; stroke: #d3d8e6; stroke-linejoin: round; }
.road { fill: none; stroke: #fff; stroke-linejoin: round; }
.edge { fill: none; stroke: #fff6e4; stroke-linejoin: round; }
.hwy { fill: none; stroke-linejoin: round; }
.hwy.way, .ramp.way { stroke: #ffb366; }
.hwy.trunk, .ramp.trunk { stroke: #f8e071; }
.ramp { fill: none; stroke-width: 4; }
.route { fill: none; stroke: #3887be; stroke-width: 15; stroke-opacity: .75; stroke-linejoin: round; }
text { text-anchor: middle; font-family: Roboto, sans-serif; paint-order: stroke; stroke-linejoin: round; }
.place { font-size: 40px; fill: #404347; stroke: #ffffffb0; stroke-width: 5px; }
.school { font-size: 36px; fill: #b27a48; font-weight: 500; }
.nature { font-size: 36px; fill: #3f8d3b; font-weight: 500; }
.health { font-size: 36px; fill: #df5c64; font-weight: 500; }
.firm { font-size: 36px; fill: #7488ad; font-weight: 500; }
.town { font-size: 42px; fill: #1c1e22; font-weight: 500; }
.city { font-size: 49px; fill: #08090b; font-weight: 500; }
.street { font-size: 32px; fill: #3c3f43; stroke: #ffffffc0; stroke-width: 5px; }
.path-text { text-anchor: start; }
.plate { fill: #fff; stroke: #1e2230; stroke-width: 3; }
.num { font-size: 28px; font-weight: 700; fill: #2d3140; }
.brand { text-anchor: start; font: 800 44px "Open Sans", sans-serif; fill: #fff; stroke: #73786f; stroke-width: 4px; }
</style>
